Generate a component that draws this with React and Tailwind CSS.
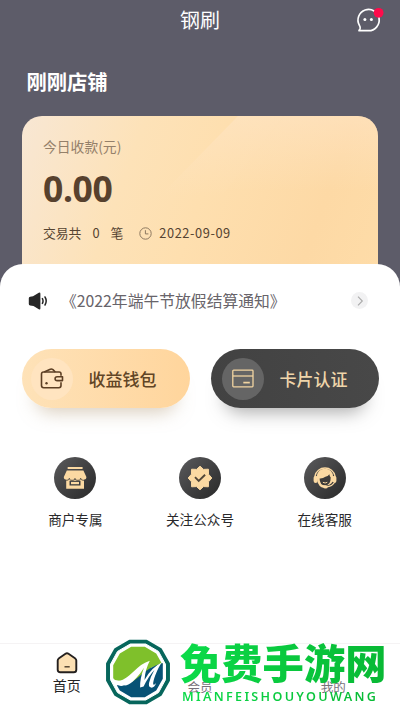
const features = [
  { label: "商户专属", Icon: ShopIcon },
  { label: "关注公众号", Icon: BadgeIcon },
  { label: "在线客服", Icon: SupportIcon }
];

function ChatIcon() {
  return (
    <svg className="h-7 w-7 overflow-visible" viewBox="0 0 28 28" fill="none">
      <path
        d="M3 24.7h9.4A10.6 10.6 0 1 0 3.3 19.2c.9 1.6 1.2 2.4.8 3.4Z"
        stroke="#fff"
        strokeWidth="1.7"
        strokeLinejoin="round"
      />
      <circle cx="8.9" cy="13.6" r="1.5" fill="#fff" />
      <circle cx="15.4" cy="13.6" r="1.5" fill="#fff" />
      <circle cx="22.6" cy="6.8" r="4.9" fill="#ff0b4b" />
    </svg>
  );
}

function SpeakerIcon() {
  return (
    <svg className="h-[18px] w-5" viewBox="0 0 20 18" fill="none">
      <path
        d="M.8 6.3Q.8 5 2.1 4.8L5 4.3 10.8.7Q12.4 0 12.4 1.7v14.6q0 1.7-1.6 1L5.5 14l-3.4-.5Q.8 13.3.8 12Z"
        fill="#262626"
      />
      <path d="M14.4 6.6q1.3 2.4 0 4.8M17 5q2.4 4 0 8" stroke="#262626" strokeWidth="1.5" strokeLinecap="round" />
    </svg>
  );
}

function WalletIcon() {
  return (
    <svg className="h-6 w-6" viewBox="0 0 24 24" fill="none" stroke="#5c3f24" strokeWidth="1.6">
      <path d="M21 8.7V6.8Q21 5 19.2 5H3.6Q1.5 5 1.5 7.1v11.4q0 2.2 2.2 2.2h15.1q2.2 0 2.2-2.2v-3.3" />
      <path d="M4.2 4.9 9.7 2.4q1.8-.8 3.3.2L15.3 5" />
      <path d="M22.5 9.8h-5.3q-2.1 0-2.1 1.9t2.1 1.9h5.3Z" strokeLinejoin="round" />
      <circle cx="6.5" cy="16.3" r="1.2" fill="#5c3f24" stroke="none" />
    </svg>
  );
}

function CardIcon() {
  return (
    <svg className="h-5 w-[22px]" viewBox="0 0 22 20" fill="none" stroke="#f1d4a1" strokeWidth="1.3">
      <rect x=".8" y="1.2" width="20.2" height="16.6" rx=".8" />
      <path d="M1 7h20" />
      <path d="M11.3 13.6h6.5" strokeWidth="1.7" />
    </svg>
  );
}

function ShopIcon() {
  return (
    <svg className="h-6 w-6" viewBox="0 0 24 24" fill="#fbd9a2">
      <rect x="4.6" y="1" width="15" height="2" rx=".5" />
      <path d="M3.8 4.5h16.6l3 6.4q0 2.7-2.8 2.7-2 0-2.9-1.6-.9 1.6-2.9 1.6T12 12q-.9 1.6-2.9 1.6T6.3 12q-.9 1.6-2.9 1.6Q.8 13.6.8 10.9Z" />
      <path
        fillRule="evenodd"
        d="M3.2 13.3h17.8v9.5H3.2ZM6.5 14.8v4.8h11v-4.8Z"
      />
      <rect x="8" y="15.9" width="8" height="2.3" />
      <path
        d="M3.2 14.5q2.1 0 3.1-1.5.9 1.5 2.8 1.5t2.9-1.5q1 1.5 2.9 1.5t2.8-1.5q1 1.5 3.3 1.5"
        fill="none"
        stroke="#45403a"
        strokeWidth=".7"
      />
    </svg>
  );
}

function BadgeIcon() {
  return (
    <svg className="h-[26px] w-[26px]" viewBox="0 0 26 26">
      <path
        d="m13 1.2 3.5 3.2 4.9-.2.1 5 3.3 3.8-3.3 3.8-.1 5-4.9-.2-3.5 3.2-3.5-3.2-4.9.2-.1-5L1.2 13l3.3-3.8.1-5 4.9.2Z"
        fill="#fbd9a2"
        stroke="#fbd9a2"
        strokeWidth="1"
        strokeLinejoin="round"
      />
      <path d="m8 12.2 3.7 3.7 6.4-6.2" fill="none" stroke="#514638" strokeWidth="1.9" />
    </svg>
  );
}

function SupportIcon() {
  return (
    <svg className="h-7 w-7" viewBox="0 0 28 28" fill="none">
      <path d="M3.9 12.3a10.3 10.3 0 0 1 20.2 0" stroke="#fbd9a2" strokeWidth="1.3" />
      <path
        d="M5.9 13.2q.2-8.5 8.1-8.5t8.1 8.5v5.2q-2 3.4-5.1 4.9-3.2 1.4-6.5-.1-4.6-2.7-4.6-10Z"
        fill="#fbd9a2"
      />
      <rect x="2.6" y="11.7" width="4" height="7.2" rx="2" fill="#fbd9a2" />
      <rect x="21.4" y="11.7" width="4" height="7.2" rx="2" fill="#fbd9a2" />
      <path d="M8.6 14.4q3.4.2 5.8-1.6 2.5-.2 4-2.6.2 2.4 1.3 3.3.1 7.7-5.5 7.7t-5.6-6.8" fill="#3d3b39" />
      <path d="M11.9 18.3q2.3 1.4 4.4 0" stroke="#fbd9a2" strokeWidth="1" />
      <path d="M22.6 18.3q-2 4.2-8.1 4.7" stroke="#3d3b39" strokeWidth="2.4" />
      <path d="M23.6 18.1q-2 4.5-8.5 4.8" stroke="#fbd9a2" strokeWidth="1.2" />
      <ellipse cx="14.5" cy="23" rx="2.2" ry="1.5" fill="#fbd9a2" />
    </svg>
  );
}

function HomeIcon() {
  return (
    <svg className="h-[22px] w-[22px]" viewBox="0 0 22 22" fill="none">
      <path
        d="M9.5 1.8q1.5-1 3 0l6.5 4.4q1.3.9 1.3 2.4v9.1q0 2.6-2.6 2.6H4.3q-2.6 0-2.6-2.6V8.6q0-1.5 1.3-2.4Z"
        fill="#fce0b3"
        stroke="#24201f"
        strokeWidth="1.9"
      />
      <path d="M8.5 14.8h5.2" stroke="#4a3a2a" strokeWidth="1.4" />
    </svg>
  );
}

function SiteLogo() {
  return (
    <svg className="h-[66px] w-[66px] shrink-0" viewBox="0 0 66 66">
      <path
        d="m24.5 2 17 0 14.2 8.3 8 14.2v17l-8 14.2-14.2 8.3h-17l-14.2-8.3-8-14.2v-17l8-14.2Z"
        fill="#07665c"
        stroke="#07665c"
        strokeWidth="2.5"
        strokeLinejoin="round"
      />
      <path
        d="m25.3 5 15.4 0 12.8 7.4 7 12.9v15.4l-7 12.9L40.7 61H25.3l-12.8-7.4-7-12.9V25.3l7-12.9Z"
        fill="#fff"
        stroke="#fff"
        strokeLinejoin="round"
      />
      <path d="m26.2 7.8 13.6 0 11.4 6.8 6.6 11.6L47 28 30 44 9.5 41.3l-1.3-2.2V26.2l6.6-11.6Z" fill="#7fc02b" />
      <path d="M57.8 24v15.8l-6.6 11.6-11.4 6.8H26.2l-11.4-6.8-3-5.2Q25 46 33 38.5 44 27.5 57.8 24Z" fill="#075275" />
      <path
        d="M8.2 39.8q3.8 3.4 9.6.9C27.5 36.5 31 26.5 44.8 21.8q-4.6 8.7-5.3 19.1 7.1-12.6 17.2-17.4c-4.2 6.4-7.5 14.6-8.5 20.3q-.4 2.2.9 1.9 1-.3 2-1.7-1.7 5-5 4.6-2.9-.4-2-4.8 1.2-5.7 5.3-12.8-5.8 6.2-10.8 16.5l-3.5 1q-.3-9.2 3.9-19.8c-5 7.6-9.8 13.7-15.6 16.7q-2.6 1.3-4.3.9c-4.6 1.9-9.6-.9-10.9-6.5Z"
        fill="#fff"
      />
    </svg>
  );
}

function NavItem({ label }) {
  return (
    <div className="flex w-1/3 flex-col items-center pt-[34px] text-[12.5px] leading-[18px] text-[#77717a]">
      {label}
    </div>
  );
}

export default function App() {
  return (
    <div className="relative flex h-[711px] w-[400px] flex-col overflow-hidden bg-[#5d5c69] font-['Noto_Sans_CJK_SC',sans-serif]">
      <header className="grid h-[39px] shrink-0 grid-cols-3 items-center">
        <span />
        <h1 className="text-center text-[20px] leading-[38px] text-white">钢刷</h1>
        <div className="flex justify-end pr-4">
          <ChatIcon />
        </div>
      </header>

      <h2 className="mt-[27px] shrink-0 pl-[26.5px] text-[20.3px] leading-[30px] font-bold text-white">刚刚店铺</h2>

      <section className="relative mx-[22px] mt-5 h-[168px] shrink-0 overflow-hidden rounded-t-[20px] bg-[linear-gradient(110deg,#f8e7d4_0%,#fde2b8_30%,#fedfaf_50%,#fdd9a5_80%,#fedca8_100%)] pl-[21px]">
        <svg className="absolute inset-0 h-full w-full" viewBox="0 0 356 168">
          <defs>
            <linearGradient id="shine" x1="0" y1="0" x2="0" y2="1">
              <stop offset="0" stopColor="#ffe6ca" stopOpacity=".5" />
              <stop offset="1" stopColor="#ffe6ca" stopOpacity="0" />
            </linearGradient>
          </defs>
          <path d="M216 0h46L200 80h-62Z" fill="url(#shine)" />
          <path d="M262 0h94v75H204Z" fill="url(#shine)" />
        </svg>
        <div className="relative">
          <p className="pt-[20px] text-[13.8px] leading-5 text-[#94806a]">今日收款(元)</p>
          <p className="mt-2.5 text-[35.5px] leading-[44px] font-bold text-[#57412e] font-['Noto_Sans','Noto_Sans_CJK_SC',sans-serif] tracking-[-0.4px]">
            0.00
          </p>
          <div className="mt-[13px] flex items-center text-[12.8px] leading-5 text-[#554331]">
            <span>交易共</span>
            <span className="ml-[11px]">0</span>
            <span className="ml-[11px]">笔</span>
            <svg className="ml-4 h-[13px] w-[13px]" viewBox="0 0 13 13" fill="none" stroke="#8c7860">
              <circle cx="6.5" cy="6.5" r="5.7" />
              <path d="M6.4 3.2v3.7h3" />
            </svg>
            <span className="ml-[7px] tracking-[0.58px]">2022-09-09</span>
          </div>
        </div>
      </section>

      <main className="relative -mt-5 grow rounded-t-[23px] bg-white">
        <div className="flex h-[73px] items-center pl-7 pr-8">
          <SpeakerIcon />
          <p className="ml-[13px] grow text-[15.8px] leading-6 whitespace-nowrap text-[#68646a]">
            《2022年端午节放假结算通知》
          </p>
          <span className="flex h-[17px] w-[17px] items-center justify-center rounded-full bg-[#f2f2f3]">
            <svg className="h-2.5 w-2" viewBox="0 0 8 10" fill="none" stroke="#aaa" strokeWidth="1.1">
              <path d="m2 .7 4.3 4.3L2 9.3" />
            </svg>
          </span>
        </div>

        <div className="mt-3 flex justify-between pl-[21.5px] pr-[21px]">
          <button
            type="button"
            className="flex h-[59px] w-[168px] items-center rounded-full bg-linear-to-r from-[#fee2b8] to-[#ffd59c] pl-[9px] shadow-[0_18px_18px_-14px_#b49b7a80]"
          >
            <span className="flex h-[42px] w-[42px] items-center justify-center rounded-full bg-[#ffe4c0]">
              <WalletIcon />
            </span>
            <span className="ml-4 text-[17px] leading-6 font-medium text-[#614526]">收益钱包</span>
          </button>
          <button
            type="button"
            className="flex h-[59px] w-[168px] items-center rounded-full bg-linear-to-r from-[#424242] to-[#484848] pl-[10.5px] shadow-[0_18px_18px_-14px_#55555580]"
          >
            <span className="flex h-[42px] w-[42px] items-center justify-center rounded-full bg-[#656565]">
              <CardIcon />
            </span>
            <span className="ml-4 text-[17px] leading-6 font-medium text-[#efd5aa]">卡片认证</span>
          </button>
        </div>

        <div className="mt-[49px] flex justify-between px-[13px]">
          {features.map(({ label, Icon }) => (
            <div key={label} className="flex w-[125px] flex-col items-center">
              <span className="flex h-[42px] w-[42px] items-center justify-center rounded-full bg-linear-to-br from-[#5b5b5d] to-[#292929]">
                <Icon />
              </span>
              <span className="mt-2.5 text-[13.6px] leading-5 text-[#29292b]">{label}</span>
            </div>
          ))}
        </div>
      </main>

      <nav className="relative flex h-[68px] shrink-0 border-t border-[#f5f3f4] bg-white">
        <div className="flex w-1/3 flex-col items-center pt-2">
          <HomeIcon />
          <span className="mt-px text-[14px] leading-5 text-[#252525]">首页</span>
        </div>
        <NavItem label="会员" />
        <NavItem label="我的" />
      </nav>

      <div className="pointer-events-none absolute bottom-[6px] left-[105px] flex items-start">
        <SiteLogo />
        <div className="ml-[9px] bg-linear-to-r from-[#0bdb49] to-[#08b834] bg-clip-text text-transparent">
          <p className="h-[50px] text-[41.3px] leading-[45px] font-black whitespace-nowrap">免费手游网</p>
          <p className="pl-0.5 font-['Noto_Sans',sans-serif] text-[12.6px] leading-4 font-semibold tracking-[2.3px] whitespace-nowrap">
            MIANFEISHOUYOUWANG
          </p>
        </div>
      </div>
    </div>
  );
}
